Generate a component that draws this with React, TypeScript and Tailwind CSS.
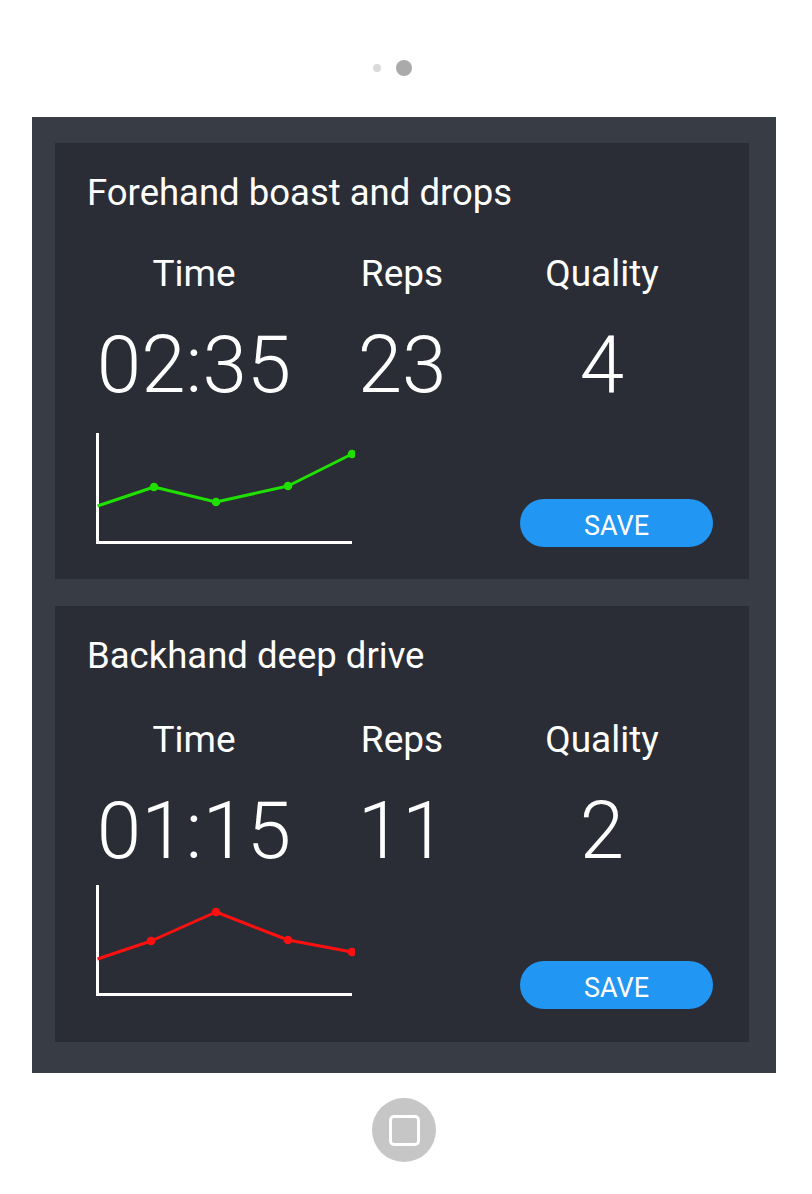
import React from "react";

type Pt = [number, number];

function Chart({ points, color }: { points: Pt[]; color: string }) {
  const d = points.map((p, i) => `${i === 0 ? "M" : "L"} ${p[0]} ${p[1]}`).join(" ");
  return (
    <svg width="260" height="113" viewBox="0 0 260 113" className="block shrink-0">
      <path d="M 2.5 0 V 109.5 H 257" fill="none" stroke="#ffffff" strokeWidth="3" />
      <path d={d} fill="none" stroke={color} strokeWidth="3" strokeLinejoin="round" />
      {points.slice(1).map((p, i) => (
        <circle key={i} cx={p[0]} cy={p[1]} r="4.3" fill={color} />
      ))}
    </svg>
  );
}

function Card({
  title,
  time,
  reps,
  quality,
  points,
  color,
  labelCls,
  chartCls,
  btnCls,
}: {
  title: string;
  time: string;
  reps: string;
  quality: string;
  points: Pt[];
  color: string;
  labelCls: string;
  chartCls: string;
  btnCls: string;
}) {
  return (
    <div className="w-[694px] h-[436px] bg-[#2a2d35] text-white pt-[32px]">
      <div className="pl-[32px] text-[36.5px] leading-[36px] font-normal">{title}</div>
      <div className={`flex ml-[33px] text-[37px] leading-[36px] ${labelCls}`}>
        <div className="w-[212px] text-center">Time</div>
        <div className="w-[204px] text-center">Reps</div>
        <div className="w-[196px] text-center">Quality</div>
      </div>
      <div className="flex ml-[33px] mt-[32px] text-[80px] leading-[82px] font-light">
        <div className="w-[212px] text-center">{time}</div>
        <div className="w-[204px] text-center">{reps}</div>
        <div className="w-[196px] text-center">{quality}</div>
      </div>
      <div className={`flex items-start ${chartCls}`}>
        <div className="ml-[40px]">
          <Chart points={points} color={color} />
        </div>
        <button
          className={`ml-[165px] w-[193px] h-[48px] rounded-full bg-[#2196f3] text-white text-[27px] leading-[48px] pt-[3px] font-normal ${btnCls}`}
        >
          SAVE
        </button>
      </div>
    </div>
  );
}

export default function App() {
  return (
    <div
      className="w-[812px] h-[1194px] bg-white overflow-hidden"
      style={{ fontFamily: "Roboto, 'Liberation Sans', sans-serif" }}
    >
      <div className="mt-[60px] h-[16px] flex items-center pl-[373px] gap-[15px]">
        <div className="w-[8px] h-[8px] rounded-full bg-[#d9d9d9]" />
        <div className="w-[16px] h-[16px] rounded-full bg-[#aaaaaa]" />
      </div>
      <div className="ml-[32px] mt-[41px] w-[744px] h-[956px] bg-[#383c45] pt-[26px] pl-[23px] flex flex-col gap-[27px]">
        <Card
          title="Forehand boast and drops"
          time="02:35"
          reps="23"
          quality="4"
          color="#1fe000"
          labelCls="mt-[45px]"
          chartCls="mt-[27px]"
          btnCls="mt-[66px]"
          points={[
            [2.5, 73],
            [59, 54],
            [121, 69],
            [193, 53],
            [257, 21],
          ]}
        />
        <Card
          title="Backhand deep drive"
          time="01:15"
          reps="11"
          quality="2"
          color="#ff1010"
          labelCls="mt-[48px]"
          chartCls="mt-[13px]"
          btnCls="mt-[76px]"
          points={[
            [2.5, 74],
            [56, 56],
            [121, 27],
            [193, 55],
            [257, 67],
          ]}
        />
      </div>
      <div className="ml-[372px] mt-[25px] w-[64px] h-[64px] rounded-full bg-[#c6c6c6] flex items-center justify-center">
        <div className="w-[31px] h-[31px] rounded-[5px] border-[3px] border-white" />
      </div>
    </div>
  );
}
